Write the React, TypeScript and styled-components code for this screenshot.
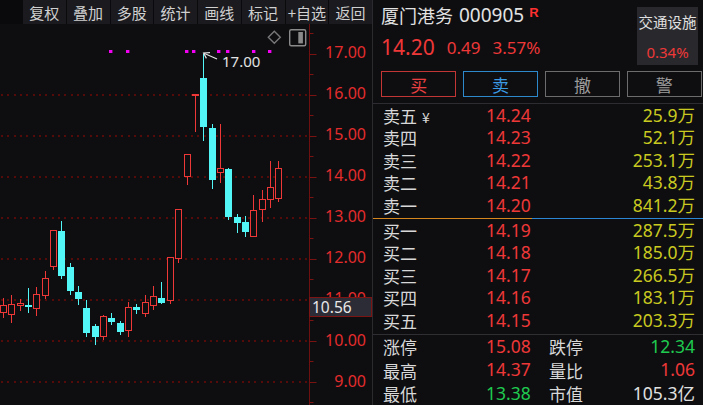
import React from 'react';
import styled, { createGlobalStyle } from 'styled-components';

const RED = '#ee3838';
const CYAN = '#52f6f6';
const YELLOW = '#c9c920';
const GREEN = '#1fca4f';
const BG = '#0e0e11';

const GlobalStyle = createGlobalStyle`
  html, body {
    margin: 0;
    padding: 0;
    background: ${BG};
  }
  body {
    font-family: "Noto Sans", "Noto Sans CJK SC", sans-serif;
    overflow: hidden;
  }
`;

const Screen = styled.div`
  display: flex;
  width: 703px;
  height: 405px;
  background: ${BG};
  overflow: hidden;
`;

const ChartColumn = styled.div`
  width: 372px;
  flex-shrink: 0;
  display: flex;
  flex-direction: column;
`;

const Toolbar = styled.div`
  display: flex;
  height: 24px;
  padding-left: 23px;
  gap: 1px;
  background: #0a0a0c;
  box-sizing: border-box;
`;

const ToolButton = styled.div`
  flex: 1;
  display: flex;
  align-items: center;
  justify-content: center;
  background: #1b1b1f;
  color: #d0d0d0;
  font-family: "Noto Sans CJK SC", sans-serif;
  font-size: 15px;
  line-height: 1;
  white-space: nowrap;
`;

const ChartSvg = styled.svg`
  display: block;
  width: 372px;
  height: 381px;
  font-family: "Noto Sans", "Liberation Sans", sans-serif;
`;

const Panel = styled.div`
  flex: 1;
  border-left: 1px solid #2a2a2f;
  display: flex;
  flex-direction: column;
  color: #d8d8d8;
  min-width: 0;
`;

const Header = styled.div`
  height: 106px;
  box-sizing: border-box;
  padding: 0 1px 0 8px;
  border-bottom: 1px solid #2c2c31;
`;

const HeadTop = styled.div`
  display: flex;
  justify-content: space-between;
  height: 68px;
`;

const Titles = styled.div`
  display: flex;
  flex-direction: column;
`;

const NameRow = styled.div`
  margin-top: 4px;
  height: 22px;
  display: flex;
  align-items: center;
  white-space: nowrap;
  color: #e2e2e2;
`;

const StockName = styled.span`
  font-family: "Noto Sans CJK SC", sans-serif;
  font-size: 18px;
`;

const StockCode = styled.span`
  font-size: 19px;
  margin-left: 6px;
`;

const Badge = styled.span`
  color: #ff3030;
  font-family: "Liberation Sans", sans-serif;
  font-weight: 700;
  font-size: 13px;
  margin-left: 5px;
  align-self: flex-start;
  margin-top: 2px;
  line-height: 1;
`;

const QuoteRow = styled.div`
  margin-top: 9px;
  height: 24px;
  display: flex;
  align-items: center;
  gap: 12px;
  color: ${RED};
  white-space: nowrap;
`;

const Quote = styled.span<{ $size: number }>`
  font-size: ${p => p.$size}px;
`;

const SectorBox = styled.div`
  width: 61px;
  height: 58px;
  margin-top: 7px;
  margin-right: 4px;
  background: #29292d;
  display: flex;
  flex-direction: column;
  align-items: center;
  padding-top: 6px;
  box-sizing: border-box;
`;

const SectorName = styled.div`
  font-family: "Noto Sans CJK SC", sans-serif;
  font-size: 14.5px;
  line-height: 18px;
  color: #e0e0e0;
  white-space: nowrap;
`;

const SectorChange = styled.div`
  margin-top: 12px;
  font-size: 15px;
  line-height: 18px;
  color: ${RED};
`;

const ActionRow = styled.div`
  margin-top: 3px;
  display: grid;
  grid-template-columns: repeat(4, 1fr);
  gap: 6.5px;
`;

const ActionButton = styled.div<{ $tone: string; $text: string }>`
  height: 26px;
  box-sizing: border-box;
  border: 1px solid ${p => p.$tone};
  color: ${p => p.$text};
  display: flex;
  align-items: center;
  justify-content: center;
  font-family: "Noto Sans CJK SC", sans-serif;
  font-size: 17px;
  line-height: 1;
`;

const Book = styled.div`
  display: flex;
  flex-direction: column;
`;

const BookRow = styled.div`
  height: 22.5px;
  display: grid;
  grid-template-columns: 103px 44px 1fr;
  align-items: center;
  padding: 0 8px 0 10px;
  font-size: 17.5px;
  line-height: 1;
  white-space: nowrap;
`;

const RowLabel = styled.span`
  font-family: "Noto Sans CJK SC", sans-serif;
  font-size: 17px;
  color: #d8d8d8;
`;

const Yen = styled.span`
  font-size: 14px;
  margin-left: 5px;
`;

const Value = styled.span<{ $color: string }>`
  text-align: right;
  color: ${p => p.$color};
`;

const SplitLine = styled.div`
  margin-top: 1.5px;
  height: 1px;
  background: linear-gradient(to right, #d6881f 0 159px, #2b86d6 159px);
`;

const Rule = styled.div`
  margin-top: 2.5px;
  height: 1px;
  background: #2e2e33;
`;

const StatRow = styled(BookRow)`
  height: 23.3px;
  grid-template-columns: 103px 44px 79px 1fr;
`;

const StatLabel = styled(RowLabel)`
  padding-left: 19px;
`;

type Candle = [number, number, number, number]; // open, high, low, close

const candles: Candle[] = [
  [10.69, 11.04, 10.55, 10.85],
  [10.63, 11.11, 10.44, 10.88],
  [10.85, 11.01, 10.73, 10.91],
  [10.87, 11.28, 10.67, 10.83],
  [10.78, 11.3, 10.6, 11.13],
  [11.09, 11.7, 11.02, 11.52],
  [11.82, 12.7, 11.72, 12.68],
  [12.67, 12.92, 11.5, 11.58],
  [11.79, 11.89, 11.11, 11.22],
  [11.18, 11.33, 10.87, 11.01],
  [10.79, 10.99, 10.1, 10.18],
  [10.36, 10.4, 9.9, 10.1],
  [10.11, 10.63, 10.02, 10.6],
  [10.55, 10.67, 10.38, 10.46],
  [10.42, 10.48, 10.14, 10.21],
  [10.24, 10.94, 10.1, 10.82],
  [10.81, 10.89, 10.65, 10.76],
  [10.66, 11.11, 10.59, 10.94],
  [10.87, 11.33, 10.75, 11.07],
  [11.03, 11.42, 10.89, 10.91],
  [10.97, 12.02, 10.89, 12.02],
  [12.01, 13.21, 11.9, 13.21],
  [14.01, 14.54, 13.79, 14.54],
  [15.97, 16.0, 15.09, 15.99],
  [16.4, 17.0, 14.87, 15.22],
  [15.18, 15.27, 13.69, 13.92],
  [14.1, 15.27, 13.84, 14.19],
  [14.19, 14.22, 12.94, 13.02],
  [13.02, 13.09, 12.63, 12.86],
  [12.89, 13.05, 12.52, 12.66],
  [12.55, 13.55, 12.55, 13.17],
  [13.19, 13.67, 12.9, 13.45],
  [13.45, 14.39, 13.23, 13.73],
  [13.47, 14.37, 13.38, 14.2],
];

const markers = [109, 126, 185, 192, 217, 226, 252, 268];

const py = (p: number) => 53.5 + (17 - p) * 41.03;
const AXIS_X = 309.5;

const KLine: React.FC = () => {
  const levels = [17, 16, 15, 14, 13, 12, 11, 10, 9];
  const halves = [17.5, 16.5, 15.5, 14.5, 13.5, 12.5, 11.5, 10.5, 9.5, 8.5];

  return (
    <ChartSvg viewBox="0 24 372 381">
      {levels.slice(1).map(p => (
        <line
          key={`g${p}`}
          x1={1}
          x2={AXIS_X}
          y1={Math.round(py(p))}
          y2={Math.round(py(p))}
          stroke="#560b0b"
          strokeWidth={2}
          strokeDasharray="2 4.33"
          shapeRendering="crispEdges"
        />
      ))}

      {candles.map(([o, h, l, c], i) => {
        const mid = Math.round(2.8 + i * 8.35);
        const left = mid - 3;
        const up = c >= o;
        const top = py(Math.max(o, c));
        const bot = py(Math.min(o, c));
        const hy = py(h);
        const ly = py(l);
        if (up) {
          return (
            <g key={i} stroke={RED} strokeWidth={1} shapeRendering="crispEdges">
              {hy < top && <line x1={mid + 0.5} x2={mid + 0.5} y1={hy} y2={top} />}
              {ly > bot && <line x1={mid + 0.5} x2={mid + 0.5} y1={bot} y2={ly} />}
              <rect x={left + 0.5} y={top} width={5.5} height={Math.max(bot - top, 0.8)} fill={BG} />
            </g>
          );
        }
        return (
          <g key={i} shapeRendering="crispEdges">
            <line x1={mid + 0.5} x2={mid + 0.5} y1={hy} y2={ly} stroke={CYAN} />
            <rect x={left} y={top} width={6.5} height={Math.max(bot - top, 1.8)} fill={CYAN} />
          </g>
        );
      })}

      {markers.map(x => (
        <rect key={`m${x}`} x={x} y={50} width={3.4} height={3} fill="#f200f2" />
      ))}

      <g stroke="#e2e2e2" strokeWidth={1.2} fill="none">
        <line x1={217} y1={59} x2={204} y2={53.2} />
        <polyline points="210,52.6 203.6,53 206.4,58.4" />
      </g>
      <text x={222} y={66.5} fontSize={15} fill="#e2e2e2">17.00</text>

      <polygon points="274.3,31.3 280.3,37.3 274.3,43.3 268.3,37.3" fill="none" stroke="#777" strokeWidth={1.4} />
      <rect x={289.7} y={29.7} width={16} height={16} rx={1.5} fill="none" stroke="#8a8a8a" strokeWidth={1.4} />
      <rect x={298.3} y={32} width={4.6} height={11.4} fill="#8a8a8a" />

      <line x1={AXIS_X} x2={AXIS_X} y1={24} y2={405} stroke="#6e1010" />
      {levels.map(p => (
        <line key={`t${p}`} x1={AXIS_X} x2={316.5} y1={Math.round(py(p)) + 0.5} y2={Math.round(py(p)) + 0.5} stroke="#7a1212" />
      ))}
      {halves.map(p => (
        <line key={`h${p}`} x1={AXIS_X} x2={313.5} y1={Math.round(py(p)) + 0.5} y2={Math.round(py(p)) + 0.5} stroke="#7a1212" />
      ))}
      {levels.map(p => (
        <text key={`l${p}`} x={366} y={py(p) + 4.8} fontSize={16} fill="#e32c2c" textAnchor="end">
          {p.toFixed(2)}
        </text>
      ))}

      <rect x={309.5} y={297.5} width={62} height={19} fill="#2c2c36" stroke="#7c1414" />
      <text x={312} y={312.6} fontSize={15.5} fill="#e8e8e8">10.56</text>
    </ChartSvg>
  );
};

const tools = ['复权', '叠加', '多股', '统计', '画线', '标记', '+自选', '返回'];

const asks = [
  ['卖五', '14.24', '25.9万'],
  ['卖四', '14.23', '52.1万'],
  ['卖三', '14.22', '253.1万'],
  ['卖二', '14.21', '43.8万'],
  ['卖一', '14.20', '841.2万'],
];

const bids = [
  ['买一', '14.19', '287.5万'],
  ['买二', '14.18', '185.0万'],
  ['买三', '14.17', '266.5万'],
  ['买四', '14.16', '183.1万'],
  ['买五', '14.15', '203.3万'],
];

const stats = [
  { a: '涨停', av: '15.08', ac: RED, b: '跌停', bv: '12.34', bc: GREEN },
  { a: '最高', av: '14.37', ac: RED, b: '量比', bv: '1.06', bc: RED },
  { a: '最低', av: '13.38', ac: GREEN, b: '市值', bv: '105.3亿', bc: '#e0e0e0' },
];

const actions = [
  { label: '买', tone: '#c23636', text: '#e84040' },
  { label: '卖', tone: '#2e88cc', text: '#3b9be4' },
  { label: '撤', tone: '#6c6c6c', text: '#9c9c9c' },
  { label: '警', tone: '#6c6c6c', text: '#9c9c9c' },
];

export default function App() {
  return (
    <>
      <GlobalStyle />
      <Screen>
        <ChartColumn>
          <Toolbar>
            {tools.map(t => (
              <ToolButton key={t}>{t}</ToolButton>
            ))}
          </Toolbar>
          <KLine />
        </ChartColumn>

        <Panel>
          <Header>
            <HeadTop>
              <Titles>
                <NameRow>
                  <StockName>厦门港务</StockName>
                  <StockCode>000905</StockCode>
                  <Badge>R</Badge>
                </NameRow>
                <QuoteRow>
                  <Quote $size={21}>14.20</Quote>
                  <Quote $size={17}>0.49</Quote>
                  <Quote $size={17}>3.57%</Quote>
                </QuoteRow>
              </Titles>
              <SectorBox>
                <SectorName>交通设施</SectorName>
                <SectorChange>0.34%</SectorChange>
              </SectorBox>
            </HeadTop>
            <ActionRow>
              {actions.map(a => (
                <ActionButton key={a.label} $tone={a.tone} $text={a.text}>
                  {a.label}
                </ActionButton>
              ))}
            </ActionRow>
          </Header>

          <Book>
            {asks.map(([label, price, vol], i) => (
              <BookRow key={label}>
                <RowLabel>
                  {label}
                  {i === 0 && <Yen>¥</Yen>}
                </RowLabel>
                <Value $color={RED}>{price}</Value>
                <Value $color={YELLOW}>{vol}</Value>
              </BookRow>
            ))}
          </Book>
          <SplitLine />
          <Book>
            {bids.map(([label, price, vol]) => (
              <BookRow key={label}>
                <RowLabel>{label}</RowLabel>
                <Value $color={RED}>{price}</Value>
                <Value $color={YELLOW}>{vol}</Value>
              </BookRow>
            ))}
          </Book>
          <Rule />
          <Book>
            {stats.map(s => (
              <StatRow key={s.a}>
                <RowLabel>{s.a}</RowLabel>
                <Value $color={s.ac}>{s.av}</Value>
                <StatLabel>{s.b}</StatLabel>
                <Value $color={s.bc}>{s.bv}</Value>
              </StatRow>
            ))}
          </Book>
        </Panel>
      </Screen>
    </>
  );
}
